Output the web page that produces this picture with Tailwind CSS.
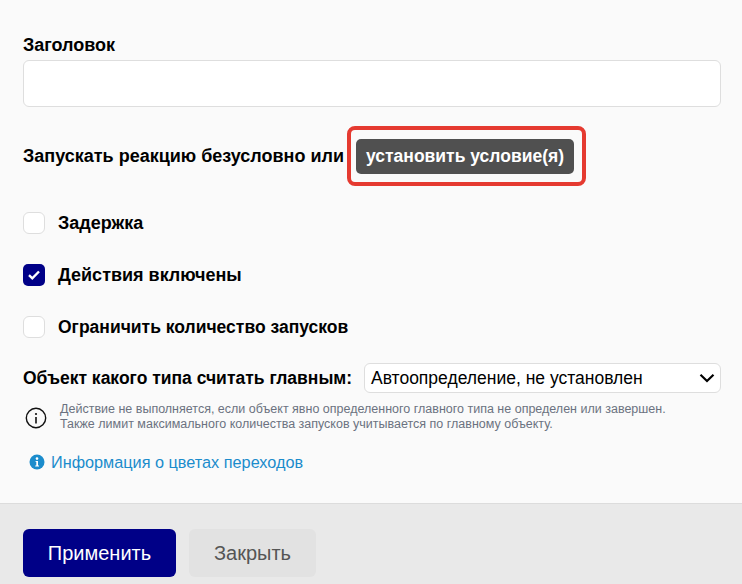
<!DOCTYPE html>
<html><head><meta charset="utf-8"><script src="https://cdn.jsdelivr.net/npm/@tailwindcss/browser@4"></script></head>
<body class="m-0 overflow-hidden">
<div class="w-[742px] h-[584px] flex flex-col bg-[#fafafa] font-['Liberation_Sans',Arial,sans-serif] text-black">
  <div class="h-[503px] pl-[23px] pr-[21px] pt-[35px] flex flex-col">
    <div class="text-[18px] leading-[20px] font-bold">Заголовок</div>
    <div class="mt-[5px] h-[47px] bg-white border border-[#dedede] rounded-[6px]"></div>
    <div class="mt-[19px] flex items-center h-[60px] relative">
      <span class="text-[18px] font-bold whitespace-nowrap">Запускать реакцию безусловно или</span>
      <span class="absolute left-[333px] top-[13px] h-[35px] w-[218px] flex items-center justify-center bg-[#505050] text-white text-[17.5px] font-bold rounded-[5px] whitespace-nowrap">установить условие(я)</span>
      <div class="absolute left-[324px] top-0 w-[239px] h-[60px] border-[4px] border-[#e53a30] rounded-[8px]"></div>
    </div>
    <div class="mt-[26px] flex flex-col gap-[30px]">
      <div class="flex items-center gap-[13px] h-[22px]"><span class="w-[22px] h-[22px] bg-white border border-[#dedede] rounded-[6px]"></span><span class="text-[18px] font-bold">Задержка</span></div>
      <div class="flex items-center gap-[13px] h-[22px]"><span class="w-[22px] h-[22px] bg-[#000087] rounded-[5px] flex items-center justify-center"><svg width="14" height="12" viewBox="0 0 14 12" fill="none"><path d="M2 6.2 5.3 9.3 12 2.5" stroke="#fff" stroke-width="2.4"/></svg></span><span class="text-[18px] font-bold">Действия включены</span></div>
      <div class="flex items-center gap-[13px] h-[22px]"><span class="w-[22px] h-[22px] bg-white border border-[#dedede] rounded-[6px]"></span><span class="text-[17.5px] font-bold">Ограничить количество запусков</span></div>
    </div>
    <div class="mt-[25px] flex items-center h-[30px] relative">
      <span class="text-[17.5px] font-bold whitespace-nowrap">Объект какого типа считать главным:</span>
      <div class="absolute left-[341px] top-0 w-[357px] h-[30px] bg-white border border-[#dedede] rounded-[6px] flex items-center justify-between pl-[6px] pr-[5px] text-[17.5px]">
        <span>Автоопределение, не установлен</span>
        <svg width="16" height="10" viewBox="0 0 16 10" fill="none"><path d="M1.5 1.8 8 8 14.5 1.8" stroke="#000" stroke-width="2.2"/></svg>
      </div>
    </div>
    <div class="mt-[7px] flex items-start">
      <svg class="mt-[7px] ml-[2px]" width="22" height="22" viewBox="0 0 22 22" fill="none"><circle cx="11" cy="11" r="9.7" stroke="#111" stroke-width="1.4"/><circle cx="11" cy="7" r="1.1" fill="#111"/><path d="M11 10v6.5" stroke="#111" stroke-width="1.6"/></svg>
      <div class="ml-[13px] text-[12.5px] leading-[15px] text-[#6b7280] pt-[2px] whitespace-nowrap">Действие не выполняется, если объект явно определенного главного типа не определен или завершен.<br>Также лимит максимального количества запусков учитывается по главному объекту.</div>
    </div>
    <div class="mt-[18px] ml-[6px] flex items-center text-[16.25px] text-[#1b8ccc]">
      <svg width="16" height="16" viewBox="0 0 16 16"><circle cx="8" cy="8" r="7.5" fill="#1b8ccc"/><circle cx="8" cy="4.6" r="1.3" fill="#fff"/><path d="M6.6 7h2.4v4.4h1v1H6.2v-1h1.1V8H6.6z" fill="#fff"/></svg>
      <span class="ml-[6px]">Информация о цветах переходов</span>
    </div>
  </div>
  <div class="flex-1 bg-[#e9e9e9] border-t border-[#dcdcdc] pl-[23px] pt-[25px] flex gap-[13px]">
    <button class="w-[153px] h-[48px] bg-[#000087] text-white text-[20px] rounded-[6px]">Применить</button>
    <button class="w-[127px] h-[48px] bg-[#e2e2e2] text-[#555] text-[20px] rounded-[6px]">Закрыть</button>
  </div>
</div>
</body></html>
